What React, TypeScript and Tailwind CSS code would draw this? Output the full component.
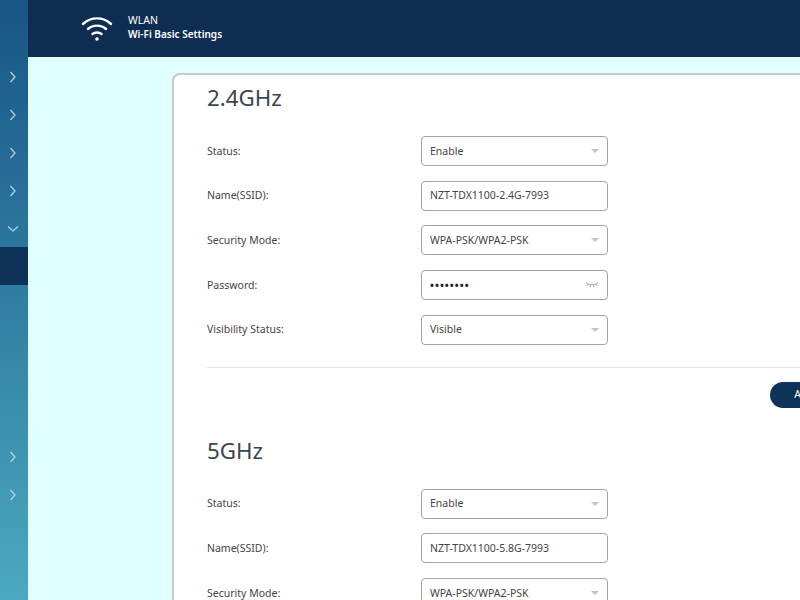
import React from "react";

const font = { fontFamily: '"Noto Sans", "Open Sans", sans-serif' };

function Chevron({ down }: { down?: boolean }) {
  return (
    <svg width="12" height="12" viewBox="0 0 12 12" fill="none" stroke="#b5d6e4" strokeWidth="1.2">
      {down ? <path d="M1 3.5 L6 8 L11 3.5" /> : <path d="M3.5 1 L8 6 L3.5 11" />}
    </svg>
  );
}

function SideItem({ down }: { down?: boolean }) {
  return (
    <div className="h-[38px] flex items-center justify-center shrink-0 pr-[2px] pt-[1px]">
      <Chevron down={down} />
    </div>
  );
}

function Caret() {
  return <span className="w-0 h-0 border-l-[4px] border-r-[4px] border-t-[4px] border-l-transparent border-r-transparent border-t-[#c4c4c4]" />;
}

function Eye() {
  return (
    <svg width="14" height="8" viewBox="0 0 14 8" fill="none" stroke="#8a8a8a" strokeWidth="0.8">
      <path d="M1 1.5 C4 4.5 10 4.5 13 1.5" />
      <path d="M3 3.2 L2 5 M5.5 4 L5.2 6 M8.5 4 L8.8 6 M11 3.2 L12 5" />
    </svg>
  );
}

function Row({ label, value, kind }: { label: string; value: string; kind: "select" | "input" | "password" }) {
  return (
    <div className="flex items-center h-[30px] mb-[14.7px]">
      <div className="w-[214px] shrink-0 pt-[1px] text-[10.5px] text-[#444]">{label}</div>
      <div className="w-[187px] h-[30px] shrink-0 flex items-center justify-between pl-2 pr-[8px] bg-white border border-[#a3a3a3] rounded-[4px] text-[10.5px] text-[#444]">
        <span className={kind === "password" ? "pt-[1px] text-[#222] tracking-[1px] font-bold" : "pt-[1px]"}>{value}</span>
        {kind === "select" && <Caret />}
        {kind === "password" && <Eye />}
      </div>
    </div>
  );
}

export default function App() {
  return (
    <div className="w-[800px] h-[600px] overflow-hidden flex bg-[#dfffff]" style={font}>
      <aside className="w-[28px] h-full shrink-0 flex flex-col bg-gradient-to-b from-[#185586] to-[#4ca9bf]">
        <div className="h-[57px] shrink-0" />
        <SideItem />
        <SideItem />
        <SideItem />
        <SideItem />
        <SideItem down />
        <div className="h-[38px] shrink-0 bg-[#0f3358]" />
        <div className="h-[152px] shrink-0" />
        <SideItem />
        <SideItem />
      </aside>
      <main className="flex-1 min-w-0 flex flex-col">
        <header className="h-[57px] shrink-0 bg-[#0f2d52] flex items-center pl-[53px] text-white">
          <svg width="32" height="26" viewBox="0 0 32 26" fill="none" stroke="#ffffff" strokeWidth="2.4" strokeLinecap="round">
            <path d="M2 8 C10 0.5 22 0.5 30 8" />
            <path d="M7 13 C12 8.5 20 8.5 25 13" />
            <path d="M11.5 18 C14 16 18 16 20.5 18" />
            <circle cx="16" cy="23" r="1.8" fill="#ffffff" stroke="none" />
          </svg>
          <div className="ml-[15px] flex flex-col gap-[1px] pb-[3px] leading-[13px]">
            <span className="font-normal text-[10.5px]">WLAN</span>
            <span className="font-semibold text-[10px]">Wi-Fi Basic Settings</span>
          </div>
        </header>
        <div className="flex-1 min-h-0 pt-4 pl-[144px] overflow-hidden">
          <section className="w-[800px] bg-white border-2 border-[#c9c9c9] border-b-0 rounded-tl-[8px] pl-[33px] pr-8">
            <h2 className="text-[22.3px] leading-[30px] text-[#3c4550] mb-[23px] mt-[8px]">2.4GHz</h2>
            <Row label="Status:" value="Enable" kind="select" />
            <Row label="Name(SSID):" value="NZT-TDX1100-2.4G-7993" kind="input" />
            <Row label="Security Mode:" value="WPA-PSK/WPA2-PSK" kind="select" />
            <Row label="Password:" value="••••••••" kind="password" />
            <Row label="Visibility Status:" value="Visible" kind="select" />
            <div className="border-t border-[#e4e4e4] mt-[22px] pt-[12px] pl-[563px]">
              <button className="w-[76px] h-[26px] rounded-full bg-[#0f3358] text-white text-[10.5px]">Apply</button>
            </div>
            <h2 className="text-[22.3px] leading-[30px] text-[#3c4550] mb-[23px] mt-[28px]">5GHz</h2>
            <Row label="Status:" value="Enable" kind="select" />
            <Row label="Name(SSID):" value="NZT-TDX1100-5.8G-7993" kind="input" />
            <Row label="Security Mode:" value="WPA-PSK/WPA2-PSK" kind="select" />
          </section>
        </div>
      </main>
    </div>
  );
}
